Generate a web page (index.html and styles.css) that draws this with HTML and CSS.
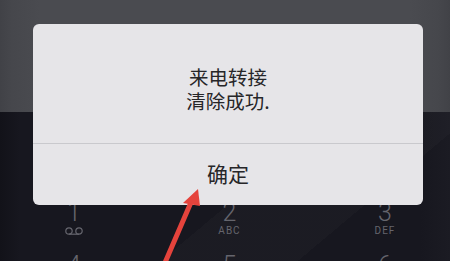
FILE: index.html
```html
<!DOCTYPE html>
<html lang="zh">
<head>
<meta charset="utf-8">
<link rel="stylesheet" href="styles.css">
</head>
<body>
<div class="screen">
  <div class="display"></div>
  <div class="keypad">
    <div class="key"><span class="digit">1</span><span class="sub vm"><svg width="20" height="8" viewBox="0 0 20 8"><circle cx="5" cy="4" r="3.2" fill="none" stroke="currentColor" stroke-width="1.2"/><circle cx="15" cy="4" r="3.2" fill="none" stroke="currentColor" stroke-width="1.2"/><line x1="5" y1="7.2" x2="15" y2="7.2" stroke="currentColor" stroke-width="1.2"/></svg></span></div>
    <div class="key"><span class="digit">2</span><span class="sub">ABC</span></div>
    <div class="key"><span class="digit">3</span><span class="sub">DEF</span></div>
    <div class="key"><span class="digit">4</span></div>
    <div class="key"><span class="digit">5</span></div>
    <div class="key"><span class="digit">6</span></div>
  </div>
  <div class="dialog">
    <div class="message">来电转接<br>清除成功.</div>
    <div class="button">确定</div>
  </div>
  <svg class="arrow" width="450" height="261" viewBox="0 0 450 261">
    <line x1="164" y1="265" x2="192" y2="200" stroke="#e5433c" stroke-width="5" stroke-linecap="round"/>
    <polygon points="198,189 183,203 200,206" fill="#e5433c"/>
  </svg>
</div>
</body>
</html>
```

FILE: styles.css
```css
html, body {
  margin: 0;
  padding: 0;
}
body {
  width: 450px;
  height: 261px;
  overflow: hidden;
  background: #16161f;
  font-family: "Noto Sans CJK SC", "Noto Sans", sans-serif;
}
.screen {
  position: relative;
  width: 450px;
  height: 261px;
  overflow: hidden;
  background:
    linear-gradient(140deg, rgba(255,255,255,0) 62%, rgba(255,255,255,0.018) 62%, rgba(255,255,255,0.018) 80%, rgba(255,255,255,0) 80%),
    linear-gradient(90deg, #121219 0px, #17171f 20px, #17171f 420px, #1b1b23 450px);
}
.display {
  height: 112px;
  background: linear-gradient(90deg, #414247 0px, #46474c 12px, #4a4b50 40px, #4a4b50 410px, #46474c 438px, #414247 450px);
}
.keypad {
  display: grid;
  grid-template-columns: repeat(3, 40px);
  column-gap: 115.5px;
  row-gap: 17px;
  padding-left: 54px;
  padding-top: 89px;
}
.key {
  display: flex;
  flex-direction: column;
  align-items: center;
  color: #65656d;
  font-family: Roboto, "Liberation Sans", sans-serif;
}
.digit {
  font-size: 25px;
  font-weight: 300;
  line-height: 24px;
  height: 24px;
}
.sub {
  font-size: 10px;
  line-height: 12px;
  letter-spacing: 1px;
  height: 12px;
}
.vm {
  display: flex;
  align-items: center;
}
.dialog {
  position: absolute;
  left: 33px;
  top: 24px;
  width: 390px;
  height: 181px;
  background: #e6e5e8;
  border-radius: 6px;
  display: flex;
  flex-direction: column;
}
.message {
  height: 120px;
  box-sizing: border-box;
  padding-top: 41px;
  text-align: center;
  font-size: 19.5px;
  line-height: 24px;
  color: #262628;
  border-bottom: 1px solid #c9c9cd;
}
.button {
  flex: 1;
  display: flex;
  align-items: center;
  justify-content: center;
  font-size: 21px;
  color: #262628;
  padding-bottom: 4px;
}
.arrow {
  position: absolute;
  left: 0;
  top: 0;
}
```
